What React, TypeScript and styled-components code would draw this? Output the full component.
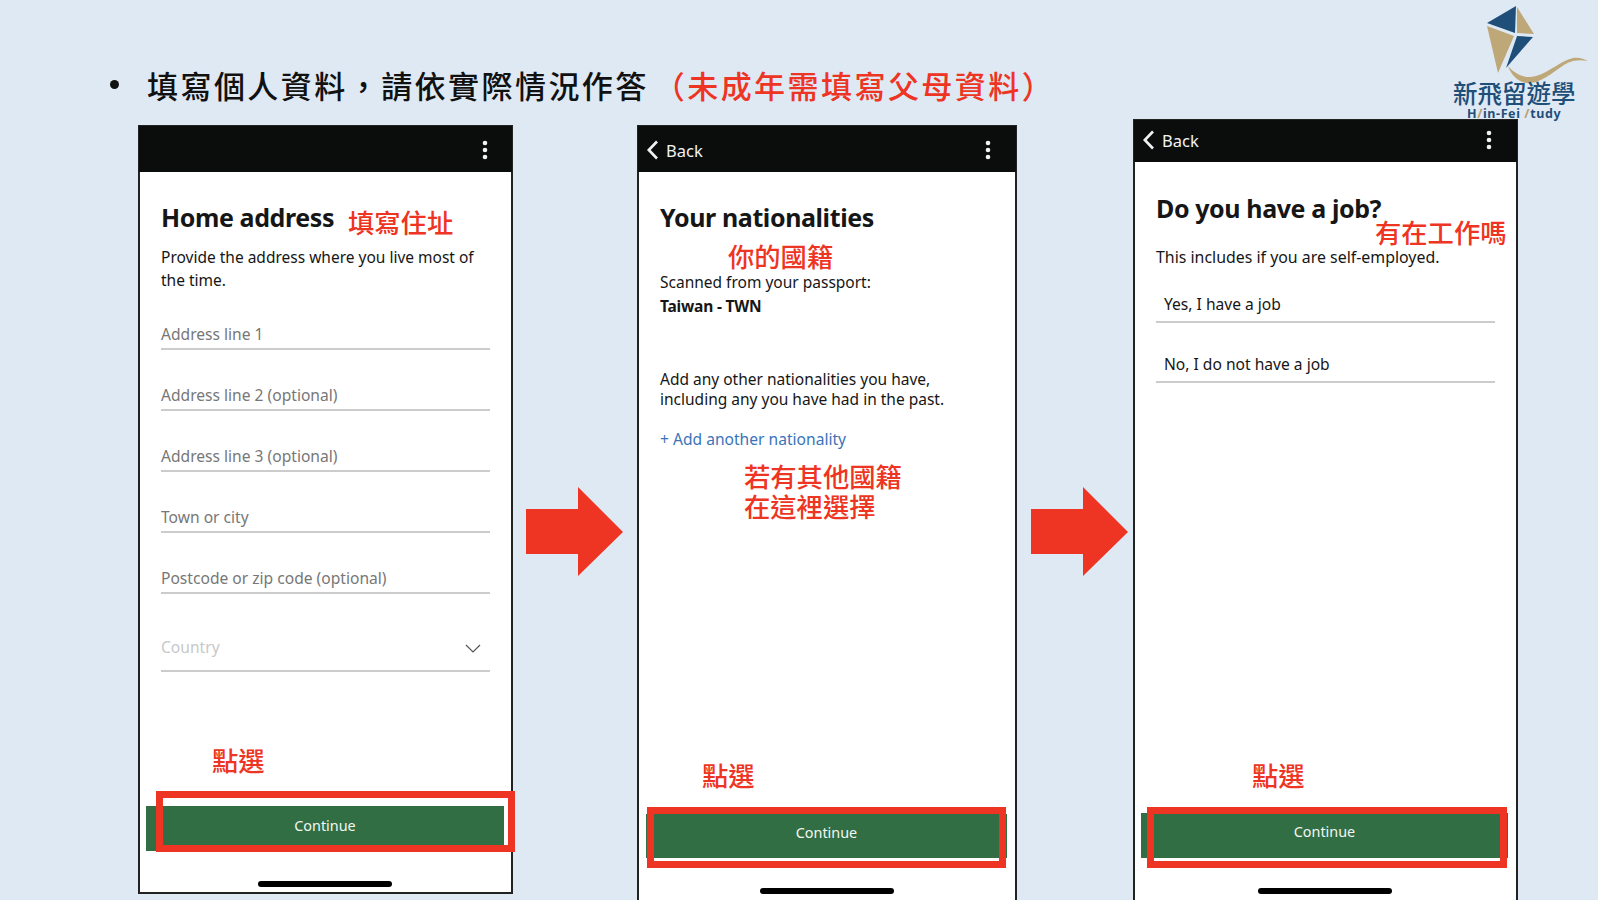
import React from "react";
import styled, { createGlobalStyle } from "styled-components";

const RED = "#ee3423";
const CJK = `"Noto Sans CJK TC", "Noto Sans", sans-serif`;
const UI = `"Noto Sans", "Noto Sans CJK TC", sans-serif`;

const GlobalStyle = createGlobalStyle`
    html, body {
        margin: 0;
        padding: 0;
        background: #dfe9f4;
    }
`;

const Slide = styled.div`
    position: relative;
    width: 1598px;
    height: 900px;
    overflow: hidden;
    background: #dfe9f4;
    font-family: ${UI};
`;

const TitleBar = styled.div`
    display: flex;
    align-items: center;
    height: 125px;
    padding: 43px 0 0 110px;
    box-sizing: border-box;
    font-family: ${CJK};
    font-size: 31px;
    font-weight: 500;
    letter-spacing: 2.45px;
    color: #111;
`;

const Bullet = styled.span`
    width: 9px;
    height: 9px;
    margin-right: 28px;
    border-radius: 50%;
    background: #111;
`;

const TitleNote = styled.span`
    margin-left: 5px;
    color: ${RED};
`;

const PhoneRow = styled.div`
    display: flex;
    align-items: flex-start;
    padding-left: 138px;
`;

const Phone = styled.section<{ $w: number; $h: number; $lift?: number; $open?: boolean }>`
    position: relative;
    z-index: 1;
    display: flex;
    flex-direction: column;
    flex: none;
    box-sizing: border-box;
    width: ${(p) => p.$w}px;
    height: ${(p) => p.$h}px;
    margin-top: ${(p) => -(p.$lift ?? 0)}px;
    border: 2px solid #222;
    border-bottom: ${(p) => (p.$open ? "none" : "2px solid #222")};
    background: #fff;
    color: #161616;
`;

const TopBar = styled.header<{ $h: number; $pad: string }>`
    display: flex;
    align-items: center;
    flex: none;
    box-sizing: border-box;
    height: ${(p) => p.$h}px;
    margin: -1px -1px 0;
    padding: ${(p) => p.$pad};
    background: #0b0d0d;
    color: #f2f2f2;
    font-size: 16.5px;
`;

const BackLink = styled.span`
    display: flex;
    align-items: center;
    gap: 7px;
`;

const Kebab = styled.svg`
    margin-left: auto;
`;

const Body = styled.div<{ $top: number }>`
    flex: 1;
    padding: ${(p) => p.$top}px 21px 0 21px;
`;

const Heading = styled.h2`
    margin: 0;
    font-size: 25px;
    line-height: 34px;
    font-weight: 700;
    letter-spacing: -0.4px;
`;

const Paragraph = styled.p<{ $top: number; $line?: number; $size?: number }>`
    margin: ${(p) => p.$top}px 0 0;
    font-size: ${(p) => p.$size ?? 15.5}px;
    line-height: ${(p) => p.$line ?? 23}px;
`;

const Strong = styled.strong`
    display: block;
    font-weight: 700;
    letter-spacing: -0.2px;
`;

const LinkText = styled.div`
    margin-top: 19px;
    font-size: 15.6px;
    line-height: 23px;
    color: #3a74b8;
`;

const FieldList = styled.div`
    margin-top: -3px;
`;

const Field = styled.div<{ $tall?: boolean; $muted?: boolean }>`
    display: flex;
    align-items: flex-end;
    justify-content: space-between;
    box-sizing: border-box;
    height: ${(p) => (p.$tall ? 78 : 61)}px;
    padding-bottom: ${(p) => (p.$tall ? 11 : 2)}px;
    border-bottom: 2px solid #cccccc;
    font-size: 15.6px;
    line-height: 23px;
    color: ${(p) => (p.$muted ? "#c8c8c8" : "#777")};
`;

const FieldChevron = styled.svg`
    margin: 0 9px 5px 0;
`;

const ChoiceList = styled.div`
    margin-top: -6px;
`;

const Choice = styled.div`
    box-sizing: border-box;
    height: 60px;
    padding: 30px 8px 0;
    border-bottom: 2px solid #cccccc;
    font-size: 15.6px;
    line-height: 23px;
`;

const Footer = styled.div<{ $left: number; $right: number; $bottom: number }>`
    display: flex;
    flex-direction: column;
    flex: none;
    padding: 0 ${(p) => p.$right}px ${(p) => p.$bottom}px ${(p) => p.$left}px;
`;

const ContinueButton = styled.div<{ $h: number; $pad?: number }>`
    position: relative;
    display: flex;
    align-items: center;
    justify-content: center;
    box-sizing: border-box;
    height: ${(p) => p.$h}px;
    padding-bottom: ${(p) => p.$pad ?? 8}px;
    background: #316e43;
    color: #f3f6f3;
    font-size: 14.4px;
`;

const RedFrame = styled.div<{ $t: number; $r: number; $b: number; $l: number }>`
    position: absolute;
    top: ${(p) => p.$t}px;
    right: ${(p) => p.$r}px;
    bottom: ${(p) => p.$b}px;
    left: ${(p) => p.$l}px;
    border: 7px solid ${RED};
`;

const HomeBar = styled.div<{ $top: number }>`
    align-self: center;
    width: 134px;
    height: 6px;
    margin-top: ${(p) => p.$top}px;
    border-radius: 3px;
    background: #000;
`;

const Note = styled.div<{ $x: number; $y: number }>`
    position: absolute;
    left: ${(p) => p.$x}px;
    top: ${(p) => p.$y}px;
    z-index: 2;
    white-space: nowrap;
    font-family: ${CJK};
    font-size: 26.3px;
    font-weight: 500;
    line-height: 30px;
    color: ${RED};
`;

const Arrow = styled.svg<{ $before: number; $after: number }>`
    flex: none;
    margin: 362px ${(p) => p.$after}px 0 ${(p) => p.$before}px;
`;

const Logo = styled.div`
    position: absolute;
    top: 0;
    left: 1450px;
    width: 148px;
`;

const LogoMark = styled.svg`
    display: block;
`;

const LogoName = styled.div`
    margin-top: -7px;
    padding-left: 3px;
    font-family: ${CJK};
    font-size: 24.5px;
    font-weight: 500;
    line-height: 24px;
    color: #1f4e79;
`;

const LogoLatin = styled.div`
    margin-top: 1px;
    padding-left: 17px;
    font-family: "Noto Sans", sans-serif;
    font-size: 12.5px;
    line-height: 15px;
    font-weight: 700;
    letter-spacing: 0.6px;
    color: #1f4e79;
`;

const LogoSlash = styled.span`
    color: #b9a06f;
`;

const BackIcon = () => (
    <svg width="13" height="20" viewBox="0 0 13 20" fill="none">
        <path d="M11 1.5 2.8 10l8.2 8.5" stroke="#f2f2f2" strokeWidth="2.6" />
    </svg>
);

const KebabIcon = () => (
    <Kebab width="6" height="20" viewBox="0 0 6 20" fill="#f2f2f2">
        <circle cx="3" cy="3" r="2.3" />
        <circle cx="3" cy="10" r="2.3" />
        <circle cx="3" cy="17" r="2.3" />
    </Kebab>
);

const RightArrow = ({ before, after }: { before: number; after: number }) => (
    <Arrow $before={before} $after={after} width="97" height="89" viewBox="0 0 97 89" fill={RED}>
        <path d="M0 22h52V0l45 45-45 44V67H0z" />
    </Arrow>
);

const addressFields = [
    "Address line 1",
    "Address line 2 (optional)",
    "Address line 3 (optional)",
    "Town or city",
    "Postcode or zip code (optional)",
];

export default function App() {
    return (
        <Slide>
            <GlobalStyle />
            <Logo>
                <LogoMark width="148" height="88" viewBox="1450 0 148 88">
                    <path d="M1487 23 1516 6l-1 27z" fill="#1f4e79" />
                    <path d="M1517 7l17 27-17-1z" fill="#bfa878" />
                    <path d="M1487 26l27 10-16 37z" fill="#bfa878" />
                    <path d="M1517 36l16 1-27 31z" fill="#1f4e79" />
                    <path
                        d="M1508 66c8 9 17 13 28 10 14-4 24-15 37-18 6-1 11 1 15 3-5-1-10-1-15 0-12 3-22 16-37 21-13 4-23-3-28-16z"
                        fill="#bfa878"
                    />
                </LogoMark>
                <LogoName>新飛留遊學</LogoName>
                <LogoLatin>
                    H<LogoSlash>/</LogoSlash>in-Fei <LogoSlash>/</LogoSlash>tudy
                </LogoLatin>
            </Logo>

            <TitleBar>
                <Bullet />
                填寫個人資料，請依實際情況作答
                <TitleNote>（未成年需填寫父母資料）</TitleNote>
            </TitleBar>

            <PhoneRow>
                <Phone $w={375} $h={769}>
                    <TopBar $h={46} $pad="1px 24px 0 8px">
                        <KebabIcon />
                    </TopBar>
                    <Body $top={28}>
                        <Heading>Home address</Heading>
                        <Paragraph $top={12}>
                            Provide the address where you live most of the time.
                        </Paragraph>
                        <FieldList>
                            {addressFields.map((label) => (
                                <Field key={label}>{label}</Field>
                            ))}
                            <Field $tall $muted>
                                Country
                                <FieldChevron width="16" height="10" viewBox="0 0 16 10" fill="none">
                                    <path d="M1 1l7 7 7-7" stroke="#555" strokeWidth="1.2" />
                                </FieldChevron>
                            </Field>
                        </FieldList>
                    </Body>
                    <Footer $left={6} $right={7} $bottom={5}>
                        <ContinueButton $h={45} $pad={6}>
                            Continue
                            <RedFrame $t={-15} $r={-11} $b={-1} $l={10} />
                        </ContinueButton>
                        <HomeBar $top={30} />
                    </Footer>
                    <Note $x={208} $y={80}>填寫住址</Note>
                    <Note $x={72} $y={618}>點選</Note>
                </Phone>

                <RightArrow before={13} after={14} />

                <Phone $w={380} $h={776} $open>
                    <TopBar $h={46} $pad="2px 25px 0 8px">
                        <BackLink>
                            <BackIcon />
                            Back
                        </BackLink>
                        <KebabIcon />
                    </TopBar>
                    <Body $top={28}>
                        <Heading>Your nationalities</Heading>
                        <Paragraph $top={36} $line={24}>
                            Scanned from your passport:
                            <Strong>Taiwan - TWN</Strong>
                        </Paragraph>
                        <Paragraph $top={52} $line={19.5}>
                            Add any other nationalities you have,
                            <br />
                            including any you have had in the past.
                        </Paragraph>
                        <LinkText>+ Add another nationality</LinkText>
                    </Body>
                    <Footer $left={7} $right={8} $bottom={7}>
                        <ContinueButton $h={44}>
                            Continue
                            <RedFrame $t={-7} $r={1} $b={-10} $l={1} />
                        </ContinueButton>
                        <HomeBar $top={30} />
                    </Footer>
                    <Note $x={89} $y={114}>你的國籍</Note>
                    <Note $x={105} $y={334}>
                        若有其他國籍
                        <br />
                        在這裡選擇
                    </Note>
                    <Note $x={63} $y={633}>點選</Note>
                </Phone>

                <RightArrow before={14} after={5} />

                <Phone $w={385} $h={782} $lift={6} $open>
                    <TopBar $h={42} $pad="0 25px 2px 8px">
                        <BackLink>
                            <BackIcon />
                            Back
                        </BackLink>
                        <KebabIcon />
                    </TopBar>
                    <Body $top={29}>
                        <Heading>Do you have a job?</Heading>
                        <Paragraph $top={21} $size={15.9}>
                            This includes if you are self-employed.
                        </Paragraph>
                        <ChoiceList>
                            <Choice>Yes, I have a job</Choice>
                            <Choice>No, I do not have a job</Choice>
                        </ChoiceList>
                    </Body>
                    <Footer $left={6} $right={8} $bottom={7}>
                        <ContinueButton $h={45}>
                            Continue
                            <RedFrame $t={-6} $r={1} $b={-10} $l={6} />
                        </ContinueButton>
                        <HomeBar $top={30} />
                    </Footer>
                    <Note $x={240} $y={96}>有在工作嗎</Note>
                    <Note $x={117} $y={639}>點選</Note>
                </Phone>
            </PhoneRow>
        </Slide>
    );
}
